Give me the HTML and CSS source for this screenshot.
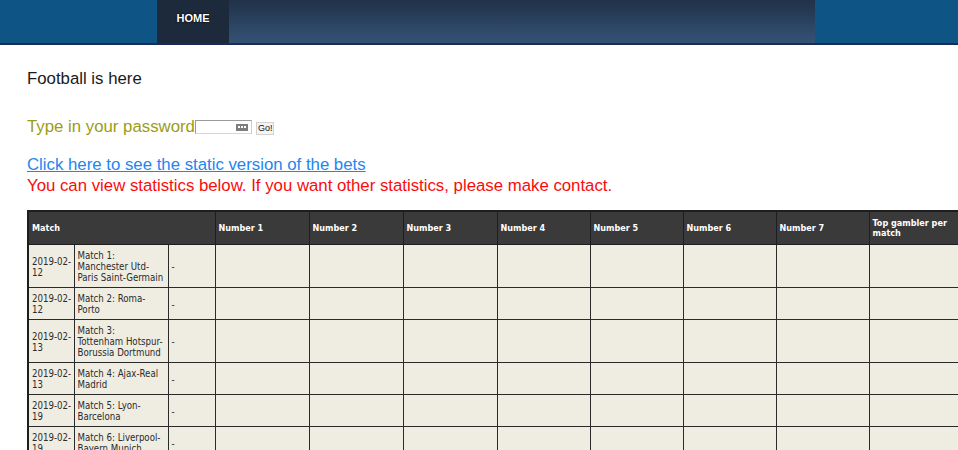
FILE: index.html
```html
<!DOCTYPE html>
<html>
<head>
<meta charset="utf-8">
<link rel="stylesheet" href="styles.css">
</head>
<body>
<header class="nav">
  <div class="nav-inner">
    <a class="nav-home" href="#">HOME</a>
    <div class="nav-fill"></div>
  </div>
</header>
<main class="content">
  <p class="title">Football is here</p>
  <form class="pw">
    <span class="pw-label">Type in your password</span><span class="pw-input"><span class="key"><i></i><i></i><i></i></span></span><button class="go" type="button">Go!</button>
  </form>
  <a class="static-link" href="#">Click here to see the static version of the bets</a>
  <p class="notice">You can view statistics below. If you want other statistics, please make contact.</p>
  <div class="table-wrap">
  <table class="bets">
    <colgroup>
      <col class="c-date"><col class="c-match"><col class="c-dash">
      <col class="c-wide"><col class="c-wide"><col class="c-wide"><col class="c-num"><col class="c-num"><col class="c-num"><col class="c-num"><col class="c-num">
    </colgroup>
    <thead>
      <tr>
        <th colspan="3">Match</th>
        <th>Number 1</th><th>Number 2</th><th>Number 3</th><th>Number 4</th><th>Number 5</th><th>Number 6</th><th>Number 7</th><th>Top gambler per match</th>
      </tr>
    </thead>
    <tbody>
      <tr><td class="date">2019-02-12</td><td>Match 1:<br>Manchester Utd-<br>Paris Saint-Germain</td><td>-</td><td></td><td></td><td></td><td></td><td></td><td></td><td></td><td></td></tr>
      <tr><td class="date">2019-02-12</td><td>Match 2: Roma-<br>Porto</td><td>-</td><td></td><td></td><td></td><td></td><td></td><td></td><td></td><td></td></tr>
      <tr><td class="date">2019-02-13</td><td>Match 3:<br>Tottenham Hotspur-<br>Borussia Dortmund</td><td>-</td><td></td><td></td><td></td><td></td><td></td><td></td><td></td><td></td></tr>
      <tr><td class="date">2019-02-13</td><td>Match 4: Ajax-Real<br>Madrid</td><td>-</td><td></td><td></td><td></td><td></td><td></td><td></td><td></td><td></td></tr>
      <tr><td class="date">2019-02-19</td><td>Match 5: Lyon-<br>Barcelona</td><td>-</td><td></td><td></td><td></td><td></td><td></td><td></td><td></td><td></td></tr>
      <tr><td class="date">2019-02-19</td><td>Match 6: Liverpool-<br>Bayern Munich</td><td>-</td><td></td><td></td><td></td><td></td><td></td><td></td><td></td><td></td></tr>
    </tbody>
  </table>
  </div>
</main>
</body>
</html>
```
FILE: styles.css
```css
html, body {
  margin: 0;
  padding: 0;
  overflow: hidden;
  background: #ffffff;
}
body {
  font-family: "Liberation Sans", Arial, sans-serif;
  color: #111;
}
.nav {
  height: 43px;
  background: #0e5586;
  border-bottom: 2px solid #1b2b55;
}
.nav-inner {
  display: flex;
  height: 43px;
  margin-left: 157px;
  width: 658px;
}
.nav-home {
  width: 72px;
  display: flex;
  justify-content: center;
  padding-top: 12px;
  box-sizing: border-box;
  background: #1d2a3b;
  color: #fff;
  font: bold 11px "Liberation Sans", Arial, sans-serif;
  text-decoration: none;
  text-shadow: 0 0 2px #000, 0 0 1px #000;
}
.nav-fill {
  flex: 1;
  background: linear-gradient(#213149, #345375);
}
.content {
  padding: 0 0 0 27px;
}
.title {
  margin: 24px 0 0;
  font-size: 16.8px;
  line-height: 19px;
  color: #1a1a1a;
}
.pw {
  margin: 29px 0 0;
  display: flex;
  align-items: center;
  height: 19px;
}
.pw-label {
  font-size: 16.8px;
  line-height: 19px;
  color: #9c9c16;
}
.pw-input {
  display: flex;
  justify-content: flex-end;
  align-items: center;
  width: 57px;
  height: 14px;
  box-sizing: border-box;
  border: 1px solid #9a9a9a;
  border-right-color: #cfcfcf;
  border-bottom-color: #d8d8d8;
  margin-top: 1px;
  padding-right: 3px;
  background: #fff;
}
.key {
  display: flex;
  gap: 1px;
  align-items: center;
  justify-content: center;
  width: 12px;
  height: 7px;
  background: #7d7d7d;
}
.key i {
  width: 2px;
  height: 2px;
  background: #fff;
}
.go {
  margin-left: 4px;
  margin-top: 3px;
  padding: 0 1px;
  height: 13px;
  font: 9px "Liberation Sans", Arial, sans-serif;
  color: #111;
  border: 1px solid #d2d2d2;
  background: #f4f4f4;
  line-height: 11px;
}
.static-link {
  display: block;
  margin-top: 18px;
  font-size: 16.8px;
  line-height: 21px;
  color: #1d86ef;
  text-decoration: underline;
}
.notice {
  margin: 0;
  font-size: 16.8px;
  line-height: 21px;
  color: #f80c0c;
}
.table-wrap {
  margin-top: 14px;
}
.bets {
  border-collapse: collapse;
  table-layout: fixed;
  width: 934px;
  border-top: 2px solid #1e1e1e;
  border-left: 2px solid #1e1e1e;
  font-family: "DejaVu Sans Condensed", "DejaVu Sans", sans-serif;
  font-size: 9.6px;
}
.c-date { width: 46px; }
.c-match { width: 94px; }
.c-dash { width: 47px; }
.c-wide { width: 94px; }
.c-num { width: 93px; }
.bets th {
  background: #3a3a3a;
  color: #fff;
  font-weight: bold;
  font-size: 9px;
  text-align: left;
  height: 32px;
  padding: 0 3px;
  line-height: 10px;
  border: 1px solid #1e1e1e;
  vertical-align: middle;
}
.bets td {
  background: #efede1;
  color: #2b2b2b;
  border: 1px solid #2a2a2a;
  padding: 5px 3px 4px;
  line-height: 11px;
  vertical-align: middle;
  white-space: nowrap;
}
.bets td.date {
  white-space: normal;
  padding-right: 0;
}
```
